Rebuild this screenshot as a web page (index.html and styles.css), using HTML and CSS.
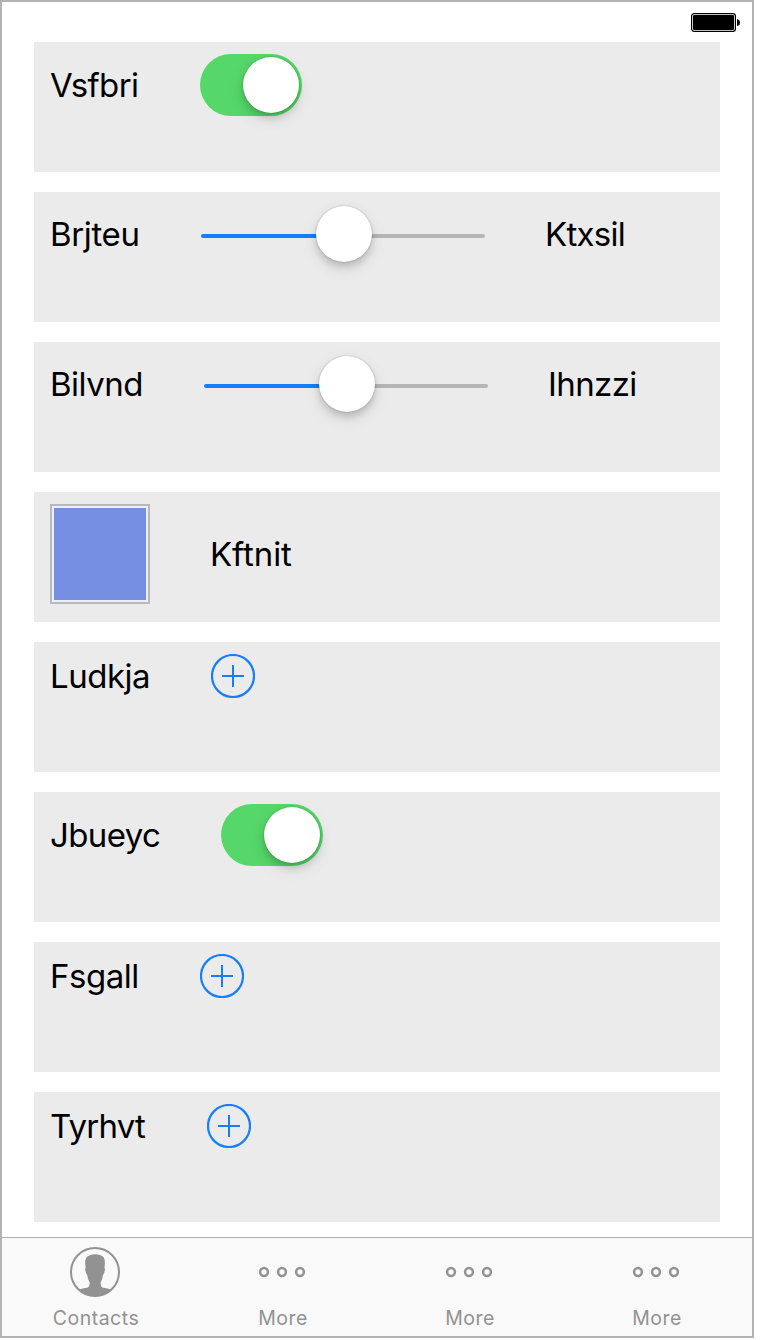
FILE: index.html
```html
<!DOCTYPE html>
<html lang="en">
<head>
<meta charset="utf-8">
<title>Settings</title>
<link rel="stylesheet" href="styles.css">
</head>
<body>
<svg class="defs" width="0" height="0">
  <symbol id="add" viewBox="0 0 44 44"><circle cx="22" cy="22" r="21" fill="none" stroke="currentColor" stroke-width="2.2"/><path d="M11 22h22M22 11v22" stroke="currentColor" stroke-width="2"/></symbol>
  <symbol id="more" viewBox="0 0 50 50"><g fill="none" stroke="currentColor" stroke-width="2.5"><circle cx="7" cy="25" r="3.9"/><circle cx="25" cy="25" r="3.9"/><circle cx="43" cy="25" r="3.9"/></g></symbol>
</svg>
<div class="screen">
  <header class="status"><svg class="battery" width="50" height="20" viewBox="0 0 50 20"><rect x=".6" y=".6" width="43.8" height="17.8" rx="2.6" fill="#fff" stroke="#000" stroke-width="1.2"/><rect x="2" y="2" width="41" height="15" rx="1.2"/><path d="M46 6.200h1q2 .8 2 3.300t-2 3.300h-1z"/></svg></header>
  <main class="list">
    <section class="cell"><div class="line"><span class="label w90 snug">Vsfbri</span><span class="switch"><i class="knob"></i></span></div></section>
    <section class="cell"><div class="line slim"><span class="label w91 loose">Brjteu</span><span class="slider"><i class="knob"></i></span><span class="label tight">Ktxsil</span></div></section>
    <section class="cell"><div class="line slim"><span class="label w94">Bilvnd</span><span class="slider"><i class="knob"></i></span><span class="label snug">Ihnzzi</span></div></section>
    <section class="cell"><div class="line"><span class="swatch"></span><span class="label natural">Kftnit</span></div></section>
    <section class="cell"><div class="line"><span class="label w101">Ludkja</span><svg class="add"><use href="#add"/></svg></div></section>
    <section class="cell"><div class="line"><span class="label w111 snug">Jbueyc</span><span class="switch"><i class="knob"></i></span></div></section>
    <section class="cell"><div class="line"><span class="label w90">Fsgall</span><svg class="add"><use href="#add"/></svg></div></section>
    <section class="cell"><div class="line"><span class="label w97 tight">Tyrhvt</span><svg class="add"><use href="#add"/></svg></div></section>
  </main>
  <nav class="tabs">
    <div class="tab"><svg class="icon" viewBox="0 0 50 50"><circle cx="25" cy="25" r="24" fill="none" stroke="currentColor" stroke-width="2"/><path fill="currentColor" d="M8.500 42.800Q12 41.200 18 40.500Q19.800 39.800 19.600 35.500Q17.800 33 17.200 28Q15.400 26 15.200 22.500Q15 21.300 15.700 20.800Q14.400 14 16.200 10.800Q19 7.200 25 7.200Q31.500 7.200 34 10.800Q35.600 14.500 34.400 20.800Q35.200 21.500 34.900 23Q34.400 26.500 33 28Q32.200 33 30.700 35.500Q30.500 39.800 32.300 40.500Q38 41.200 41.500 42.800Q34.500 49.500 25 49.500Q15.500 49.500 8.500 42.800Z"/></svg><span class="tab-name">Contacts</span></div>
    <div class="tab"><svg class="icon"><use href="#more"/></svg><span class="tab-name">More</span></div>
    <div class="tab"><svg class="icon"><use href="#more"/></svg><span class="tab-name">More</span></div>
    <div class="tab"><svg class="icon"><use href="#more"/></svg><span class="tab-name">More</span></div>
  </nav>
</div>
</body>
</html>
```

FILE: styles.css
```css
* { box-sizing: border-box; }
body { margin: 0; background: #fff; font-family: Inter, "Liberation Sans", sans-serif; color: #000; }
.defs { display: block; }
.screen { width: 754px; height: 1338px; border: 2px solid #b3b3b3; display: flex; flex-direction: column; background: #fff; }
.status { height: 40px; padding: 11px 11px 0 0; display: flex; justify-content: flex-end; flex: none; }
.battery { display: block; }
.list { flex: 1; padding: 0 32px; display: flex; flex-direction: column; gap: 20px; }
.cell { height: 130px; padding: 12px 16px; background: #ebebeb; }
.line { display: flex; align-items: center; gap: 60px; }
.slim { height: 60px; }
.label { font-size: 33px; line-height: 40px; letter-spacing: -.5px; white-space: nowrap; flex: none; }
.natural { letter-spacing: -.1px; }
.loose { letter-spacing: -.35px; }
.snug { letter-spacing: -.6px; }
.tight { letter-spacing: -.75px; }
.w90 { width: 90px; }
.w91 { width: 91px; }
.w94 { width: 94px; }
.w97 { width: 97px; }
.w101 { width: 101px; }
.w111 { width: 111px; }
.switch { width: 102px; height: 62px; border-radius: 31px; background: #55d769; display: flex; align-items: center; justify-content: flex-end; padding: 3px; }
.knob { display: block; width: 56px; height: 56px; border-radius: 50%; background: #fff; box-shadow: 0 5px 6px rgba(0,0,0,.13), 0 6px 16px rgba(0,0,0,.11), 0 0 2px rgba(0,0,0,.25); }
.slider { width: 284px; height: 60px; padding-left: 2px; display: flex; align-items: center; justify-content: center; position: relative; isolation: isolate; }
.slider::before { content: ""; position: absolute; z-index: -1; left: 0; right: 0; top: 30px; height: 4px; border-radius: 2px; background: linear-gradient(90deg, #147efb 50%, #b5b5b5 50%); }
.swatch { width: 100px; height: 100px; border: 2px solid #b9b9b9; padding: 2px; background: #768fe2 content-box; box-shadow: inset 0 0 0 2px #edf0fa; }
.add { width: 44px; height: 44px; color: #147efb; }
.tabs { height: 99px; flex: none; border-top: 1px solid #b0b0b0; background: #f9f9f9; display: flex; color: #929292; }
.tab { width: 187px; display: flex; flex-direction: column; align-items: center; padding: 9px 1px 0 0; }
.icon { width: 50px; height: 50px; display: block; }
.tab-name { font-size: 19.5px; line-height: 24px; margin-top: 9px; letter-spacing: .5px; padding-left: 2px; }
```
